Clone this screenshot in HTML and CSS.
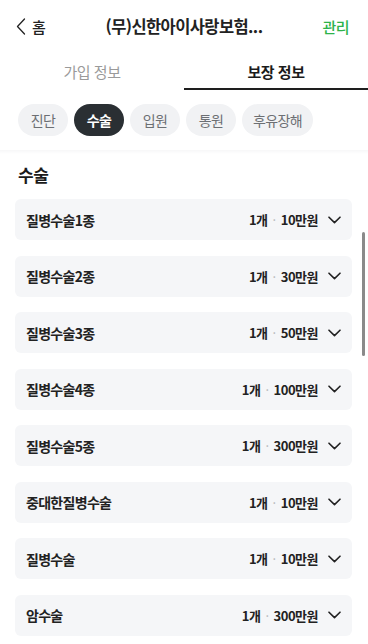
FILE: index.html
```html
<!DOCTYPE html>
<html lang="ko">
<head>
<meta charset="utf-8">
<link rel="stylesheet" href="styles.css">
</head>
<body>
<div class="app">
  <header class="topbar">
    <div class="back">
      <svg class="back-ico" width="10" height="17" viewBox="0 0 10 17"><path d="M8.5 1 L1.5 8.5 L8.5 16" fill="none" stroke="#222" stroke-width="1.3" stroke-linecap="round" stroke-linejoin="round"/></svg>
      <span class="back-label">홈</span>
    </div>
    <div class="title">(무)신한아이사랑보험...</div>
    <div class="manage">관리</div>
  </header>
  <nav class="tabs">
    <div class="tab">가입 정보</div>
    <div class="tab active">보장 정보</div>
  </nav>
  <div class="chips">
    <span class="chip">진단</span>
    <span class="chip on">수술</span>
    <span class="chip">입원</span>
    <span class="chip">통원</span>
    <span class="chip">후유장해</span>
  </div>
  <div class="sep"></div>
  <section class="content">
    <h2 class="sec-title">수술</h2>
    <div class="list">
      <div class="card"><span class="name">질병수술1종</span><span class="val">1개<i class="dot">·</i>10만원<svg class="chev" width="13" height="8" viewBox="0 0 13 8"><path d="M1 1.2 L6.5 6.6 L12 1.2" fill="none" stroke="#222" stroke-width="1.6" stroke-linecap="round" stroke-linejoin="round"/></svg></span></div>
      <div class="card"><span class="name">질병수술2종</span><span class="val">1개<i class="dot">·</i>30만원<svg class="chev" width="13" height="8" viewBox="0 0 13 8"><path d="M1 1.2 L6.5 6.6 L12 1.2" fill="none" stroke="#222" stroke-width="1.6" stroke-linecap="round" stroke-linejoin="round"/></svg></span></div>
      <div class="card"><span class="name">질병수술3종</span><span class="val">1개<i class="dot">·</i>50만원<svg class="chev" width="13" height="8" viewBox="0 0 13 8"><path d="M1 1.2 L6.5 6.6 L12 1.2" fill="none" stroke="#222" stroke-width="1.6" stroke-linecap="round" stroke-linejoin="round"/></svg></span></div>
      <div class="card"><span class="name">질병수술4종</span><span class="val">1개<i class="dot">·</i>100만원<svg class="chev" width="13" height="8" viewBox="0 0 13 8"><path d="M1 1.2 L6.5 6.6 L12 1.2" fill="none" stroke="#222" stroke-width="1.6" stroke-linecap="round" stroke-linejoin="round"/></svg></span></div>
      <div class="card"><span class="name">질병수술5종</span><span class="val">1개<i class="dot">·</i>300만원<svg class="chev" width="13" height="8" viewBox="0 0 13 8"><path d="M1 1.2 L6.5 6.6 L12 1.2" fill="none" stroke="#222" stroke-width="1.6" stroke-linecap="round" stroke-linejoin="round"/></svg></span></div>
      <div class="card"><span class="name">중대한질병수술</span><span class="val">1개<i class="dot">·</i>10만원<svg class="chev" width="13" height="8" viewBox="0 0 13 8"><path d="M1 1.2 L6.5 6.6 L12 1.2" fill="none" stroke="#222" stroke-width="1.6" stroke-linecap="round" stroke-linejoin="round"/></svg></span></div>
      <div class="card"><span class="name">질병수술</span><span class="val">1개<i class="dot">·</i>10만원<svg class="chev" width="13" height="8" viewBox="0 0 13 8"><path d="M1 1.2 L6.5 6.6 L12 1.2" fill="none" stroke="#222" stroke-width="1.6" stroke-linecap="round" stroke-linejoin="round"/></svg></span></div>
      <div class="card"><span class="name">암수술</span><span class="val">1개<i class="dot">·</i>300만원<svg class="chev" width="13" height="8" viewBox="0 0 13 8"><path d="M1 1.2 L6.5 6.6 L12 1.2" fill="none" stroke="#222" stroke-width="1.6" stroke-linecap="round" stroke-linejoin="round"/></svg></span></div>
    </div>
  </section>
  <div class="scrollbar"></div>
</div>
</body>
</html>
```
FILE: styles.css
```css
* { box-sizing: border-box; }
html, body { margin: 0; padding: 0; background: #fff; }
body {
  font-family: "Noto Sans CJK KR", "Noto Sans", sans-serif;
  color: #222;
  width: 368px;
  height: 644px;
  overflow: hidden;
}
.app { position: relative; width: 368px; height: 644px; overflow: hidden; }

.topbar {
  height: 52px;
  display: flex;
  align-items: center;
  justify-content: space-between;
  padding: 0 19px 0 16px;
  position: relative;
}
.back { display: flex; align-items: center; gap: 6px; width: 60px; }
.back-ico { display: block; }
.back-label { font-size: 15px; font-weight: 500; letter-spacing: -0.5px; }
.title {
  position: absolute;
  left: 0; right: 0;
  text-align: center;
  font-size: 16.5px;
  font-weight: 700;
  letter-spacing: -0.6px;
  pointer-events: none;
}
.manage { font-size: 15px; color: #2db34a; font-weight: 500; letter-spacing: -0.5px; }

.tabs { display: flex; height: 38px; }
.tab {
  flex: 1;
  display: flex;
  align-items: center;
  justify-content: center;
  font-size: 15px;
  color: #9a9a9a;
  letter-spacing: -0.5px;
  border-bottom: 2px solid transparent;
  padding-top: 2px;
}
.tab.active { color: #1b1b1b; font-weight: 700; border-bottom-color: #1e1e1e; }

.chips {
  display: flex;
  gap: 6px;
  padding: 14px 18px 0;
  height: 60px;
}
.chip {
  height: 32px;
  padding: 0 11px;
  border-radius: 16px;
  background: #f1f2f4;
  color: #6c6f73;
  font-size: 14px;
  letter-spacing: -0.6px;
  display: flex;
  align-items: center;
  justify-content: center;
  min-width: 50px;
}
.chip.on { background: #2a2f33; color: #fff; font-weight: 700; }

.sep {
  height: 4px;
  background: linear-gradient(#f7f7f8, #fff);
}

.content { padding: 0 16px 0 15px; }
.sec-title {
  margin: 0;
  height: 45px;
  display: flex;
  align-items: center;
  padding: 0 0 4px 3px;
  font-size: 17px;
  font-weight: 700;
  letter-spacing: -0.5px;
  color: #1b1b1b;
}
.list { display: flex; flex-direction: column; gap: 15.5px; }
.card {
  height: 41px;
  border-radius: 6px;
  background: #f5f6f8;
  display: flex;
  align-items: center;
  justify-content: space-between;
  padding: 0 11px 0 11px;
}
.name { font-size: 14px; font-weight: 700; letter-spacing: -0.7px; color: #222; }
.val {
  display: flex;
  align-items: center;
  font-size: 13px;
  font-weight: 700;
  letter-spacing: -0.5px;
  color: #222;
}
.dot { font-style: normal; color: #b5b7ba; font-weight: 400; margin: 0 5px; }
.chev { margin-left: 10px; display: block; }

.scrollbar {
  position: absolute;
  left: 362px;
  top: 232px;
  width: 3px;
  height: 124px;
  border-radius: 2px;
  background: #8a8a8a;
}
```
